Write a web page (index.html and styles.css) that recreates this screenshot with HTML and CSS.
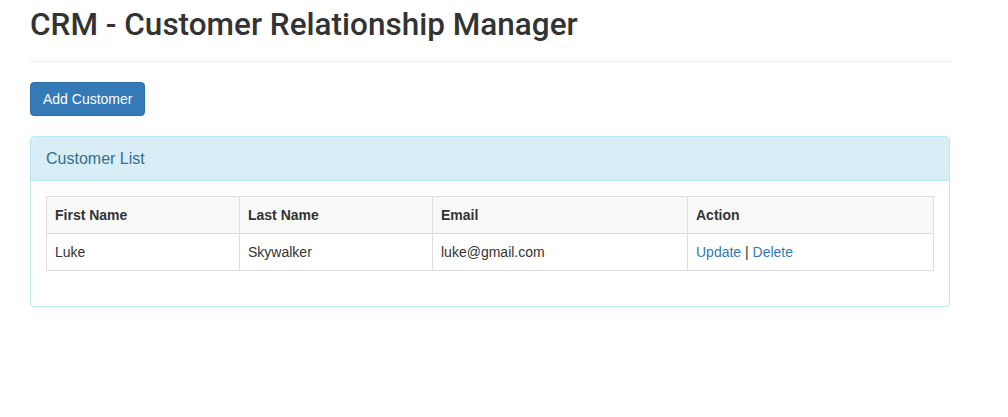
FILE: index.html
```html
<!DOCTYPE html>
<html>
<head>
<meta charset="utf-8">
<title>CRM</title>
<link rel="stylesheet" href="styles.css">
</head>
<body>
<div class="container">
  <h1 class="page-title">CRM - Customer Relationship Manager</h1>
  <button class="btn-primary" type="button">Add Customer</button>
  <div class="panel">
    <div class="panel-heading">Customer List</div>
    <div class="panel-body">
      <table class="data-table">
        <colgroup>
          <col class="c1"><col class="c2"><col class="c3"><col class="c4">
        </colgroup>
        <thead>
          <tr><th>First Name</th><th>Last Name</th><th>Email</th><th>Action</th></tr>
        </thead>
        <tbody>
          <tr>
            <td>Luke</td><td>Skywalker</td><td>luke@gmail.com</td>
            <td><a href="#" class="link">Update</a> | <a href="#" class="link">Delete</a></td>
          </tr>
        </tbody>
      </table>
    </div>
  </div>
</div>
</body>
</html>
```
FILE: styles.css
```css
* { box-sizing: border-box; }
html, body { margin: 0; padding: 0; background: #fff; }
body {
  font-family: "Liberation Sans", Arial, Helvetica, sans-serif;
  font-size: 14px;
  line-height: 1.42857;
  color: #333;
}
.container {
  width: 920px;
  margin-left: 30px;
}
.page-title {
  font-family: Roboto, "Liberation Sans", Arial, sans-serif;
  font-size: 31.5px;
  font-weight: 500;
  line-height: 33px;
  margin: 8px 0 0;
  padding-bottom: 20px;
  border-bottom: 1px solid #eee;
}
.btn-primary {
  display: inline-block;
  margin-top: 20px;
  font-family: inherit;
  font-size: 14px;
  line-height: 20px;
  padding: 6px 12px;
  color: #fff;
  background: #337ab7;
  border: 1px solid #2e6da4;
  border-radius: 4px;
  cursor: pointer;
}
.panel {
  margin-top: 20px;
  border: 1px solid #bce8f1;
  border-radius: 4px;
  box-shadow: 0 1px 1px rgba(0,0,0,0.05);
}
.panel-heading {
  background: #d9edf7;
  color: #31708f;
  font-size: 16px;
  line-height: 23px;
  padding: 10px 15px;
  border-bottom: 1px solid #bce8f1;
  border-radius: 3px 3px 0 0;
}
.panel-body {
  padding: 15px;
}
.data-table {
  width: 100%;
  border-collapse: collapse;
  border: 1px solid #ddd;
  margin-bottom: 20px;
}
.c1 { width: 193px; }
.c2 { width: 193px; }
.c3 { width: 255px; }
.c4 { width: 246px; }
.data-table th, .data-table td {
  border: 1px solid #ddd;
  padding: 8px;
  line-height: 20px;
  text-align: left;
  vertical-align: top;
}
.data-table thead th {
  background: #f9f9f9;
  font-weight: bold;
}
.link {
  color: #337ab7;
  text-decoration: none;
}
```
